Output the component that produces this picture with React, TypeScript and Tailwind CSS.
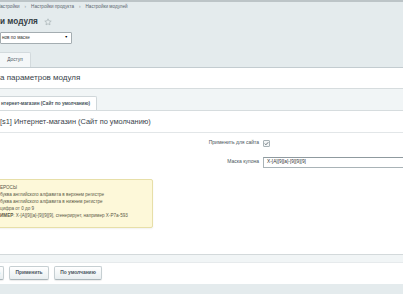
const CRUMBS = ["Настройки", "Настройки продукта", "Настройки модулей"];

const NOTE = [
  "буква английского алфавита в верхнем регистре",
  "буква английского алфавита в нижнем регистре",
  "цифра от 0 до 9",
];

function Star() {
  return (
    <svg width="8" height="8" viewBox="0 0 24 24" fill="none" stroke="#a9b3b7" strokeWidth="2.2" strokeLinejoin="round">
      <path d="M12 2.5l2.9 6.2 6.7.7-5 4.6 1.4 6.6L12 17.3l-6 3.3 1.4-6.6-5-4.6 6.7-.7z" />
    </svg>
  );
}

function Checkbox() {
  return (
    <span className="flex h-[7px] w-[7px] items-center justify-center rounded-[1px] border border-[#a8b2b6] bg-[#f3f5f6]">
      <svg width="5" height="5" viewBox="0 0 10 10" fill="none" stroke="#5b666d" strokeWidth="1.8">
        <path d="M1.5 5.2l2.3 2.3L8.5 2.5" />
      </svg>
    </span>
  );
}

function Button({ label, className = "" }: { label: string; className?: string }) {
  return (
    <button
      className={`flex h-[14px] items-center justify-center whitespace-nowrap rounded-[2px] border border-[#c6cfd2] border-b-[#aab5b9] bg-gradient-to-b from-[#ffffff] to-[#e8eef0] px-[4px] text-[4.9px] font-bold text-[#4a5560] shadow-[0_1px_1px_rgba(0,0,0,0.08)] ${className}`}
    >
      {label}
    </button>
  );
}

export default function App() {
  return (
    <div className="flex h-[294px] w-[403px] flex-col overflow-hidden border-t-2 border-[#bcc4c7] bg-[#e4ebed] font-['Liberation_Sans',Arial,sans-serif] text-[#3f4b54]">
      {/* breadcrumbs */}
      <div className="ml-[-3px] flex h-[10px] shrink-0 items-center gap-[5px] pt-[1px] text-[4.6px] text-[#5a656d]">
        {CRUMBS.map((c, i) => (
          <span key={c} className="flex items-center gap-[5px]">
            {i > 0 && <span className="text-[#8a959b]">›</span>}
            {c}
          </span>
        ))}
      </div>

      {/* title */}
      <div className="flex h-[20px] shrink-0 items-center gap-[6px] text-[8.2px] font-bold text-[#333d44]">
        <span>и модуля</span>
        <Star />
      </div>

      {/* select */}
      <div className="flex h-[12px] w-[72px] shrink-0 items-center justify-between rounded-[1px] border border-[#a4adb1] bg-white pl-[1px] pr-[3px] text-[4.6px] text-[#333]">
        <span>нов по маске</span>
        <span className="text-[3.5px] text-black">▼</span>
      </div>

      {/* top tabs */}
      <div className="mt-[7px] flex h-[16px] shrink-0 items-end">
        <div className="flex h-[15px] w-[31px] items-center justify-center rounded-tr-[2px] border-r border-t border-[#d3dadd] bg-[#f4f7f8] text-[4.8px] text-[#4b565e]">
          Доступ
        </div>
      </div>

      {/* panel */}
      <div className="flex h-[217px] shrink-0 flex-col border-t border-[#c3ccd0] bg-white">
        <div className="flex h-[21px] shrink-0 items-center border-b border-[#d6dcde] text-[8px] text-[#3a444b]">
          а параметров модуля
        </div>

        <div className="flex h-[22px] shrink-0 items-end border-b border-[#d6dcde] bg-[#f1f5f6]">
          <div className="flex h-[14px] w-[97px] items-center rounded-tr-[2px] border-r border-t border-[#d0d7da] bg-white pl-[1px] text-[4.7px] font-bold text-[#47525a]">
            нтернет-магазин (Сайт по умолчанию)
          </div>
        </div>

        <div className="flex h-[22px] shrink-0 items-center border-b border-[#e2e6e8] text-[7.4px] text-[#3a444b]">
          [s1] Интернет-магазин (Сайт по умолчанию)
        </div>

        {/* form rows */}
        <div className="mt-[4px] grid shrink-0 grid-cols-[259px_1fr] items-center gap-x-[4px] gap-y-[7px] text-[5px] text-[#4a555c]">
          <span className="flex h-[12px] items-center justify-end">Применить для сайта</span>
          <span className="flex h-[12px] items-center">
            <Checkbox />
          </span>
          <span className="flex h-[12px] items-center justify-end">Маска купона</span>
          <span className="flex h-[11px] w-[calc(100%+6px)] items-center border border-[#a9b3b7] border-t-[#8f9a9f] bg-white pl-[3px] text-[4.8px] text-[#333]">
            X-[A][9][a]-[9][9][9]
          </span>
        </div>

        {/* note */}
        <div className="ml-[-3px] mt-[11px] w-[156px] shrink-0 rounded-[2px] border border-[#e7dfa8] bg-[#fdf8d9] pb-[8px] pl-[2px] pt-[4px] text-[4.6px] leading-[7px] text-[#5b5a48] shadow-[0_1px_2px_rgba(0,0,0,0.06)]">
          <div>ЕРОСЫ</div>
          {NOTE.map((n) => (
            <div key={n}>{n}</div>
          ))}
          <div>
            <b>ИМЕР</b>: X-[A][9][a]-[9][9][9], сгенерирует, например X-P7a-593
          </div>
        </div>

        <div className="flex-1" />

        {/* footer buttons */}
        <div className="h-[9px] shrink-0 border-t border-b border-[#d3d9db] border-b-[#e6eaec] bg-[#f1f5f6]" />
        <div className="flex h-[21px] shrink-0 items-start gap-[5px] pt-[3px]">
          <Button label="Сохранить" className="ml-[-30px] w-[34px]" />
          <Button label="Применить" className="w-[40px]" />
          <Button label="По умолчанию" className="w-[48px]" />
        </div>
      </div>
    </div>
  );
}
